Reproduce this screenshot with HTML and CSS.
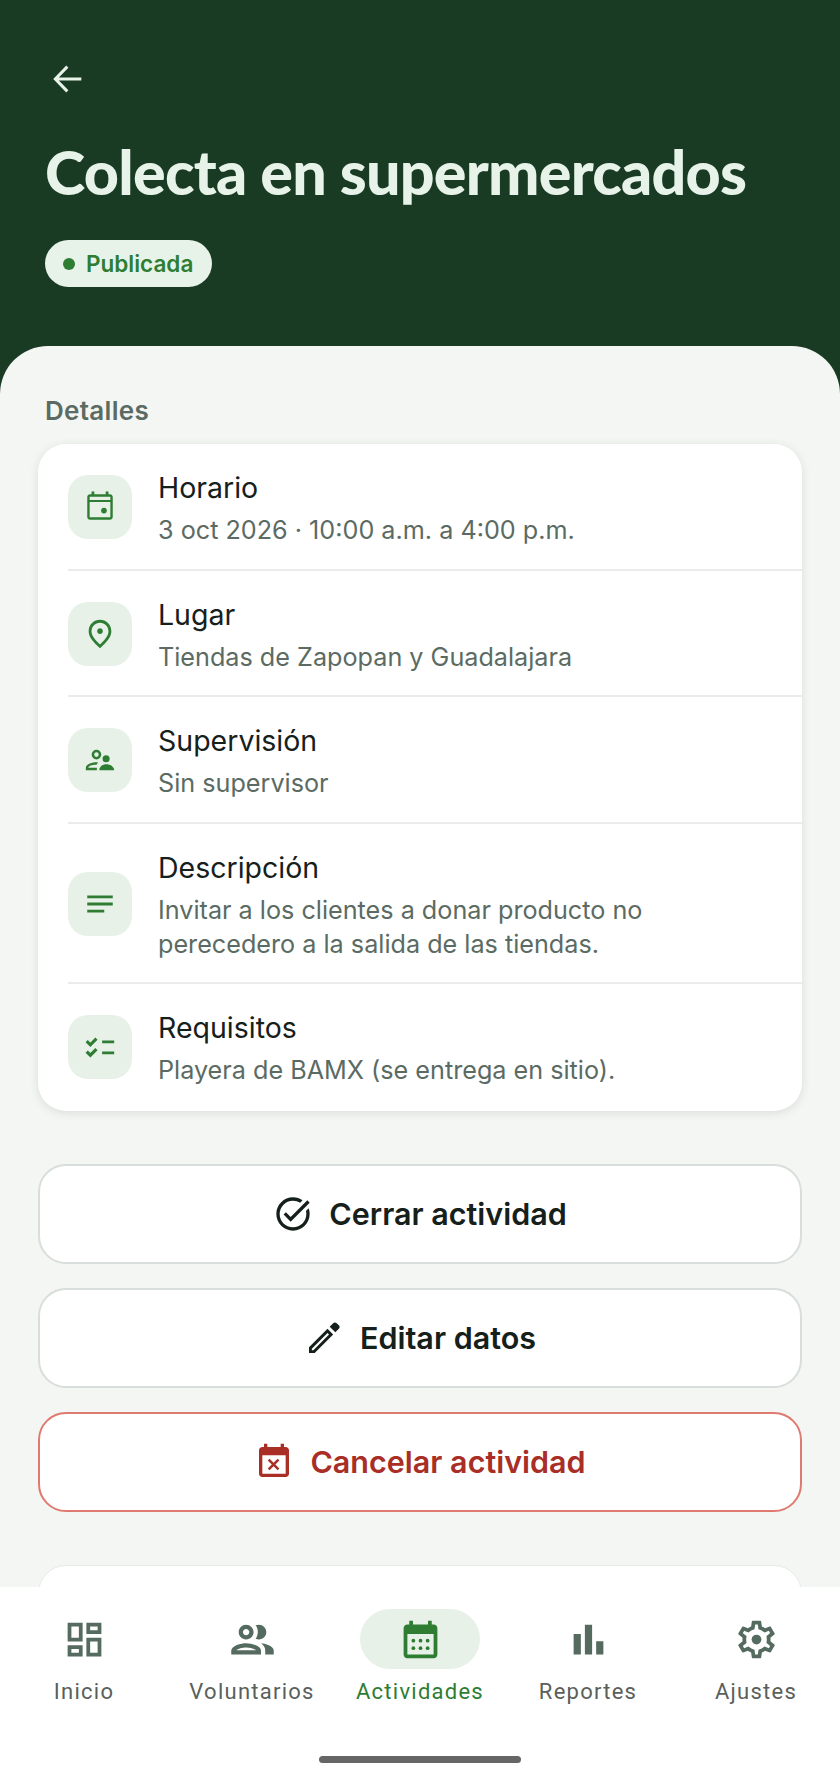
FILE: index.html
```html
<!DOCTYPE html>
<html lang="es">

<head>
  <meta charset="UTF-8">
  <meta name="viewport" content="width=device-width, initial-scale=1.0">
  <title>Colecta en supermercados</title>
  <link rel="stylesheet" href="styles.css">
</head>

<body>
  <div class="screen">
    <header class="hero">
      <svg class="back" viewBox="0 0 24 24"><path d="M20 12H4.8M11.6 4.6 4.4 12l7.2 7.4" /></svg>
      <h1>Colecta en supermercados</h1>
      <span class="chip"><i class="dot"></i>Publicada</span>
    </header>

    <main class="sheet">
      <h2 class="section">Detalles</h2>
      <section class="card">
        <div class="row">
          <div class="row-icon">
            <svg viewBox="0 0 24 24"><path d="M19 3h-1V1h-2v2H8V1H6v2H5c-1.11 0-1.99.9-1.99 2L3 19c0 1.1.89 2 2 2h14c1.1 0 2-.9 2-2V5c0-1.1-.9-2-2-2zm.3 16.300H4.700V8.500h14.600zm0-12.300H4.700V5c0-.2.1-.3.3-.3h14c.2 0 .3.1.3.3z" /><circle cx="14.8" cy="14.5" r="2" /></svg>
          </div>
          <div class="row-text">
            <div class="row-title">Horario</div>
            <div class="row-sub">3 oct 2026 · 10:00 a.m. a 4:00 p.m.</div>
          </div>
        </div>
        <div class="row">
          <div class="row-icon">
            <svg viewBox="0 0 24 24"><path d="M12 12c-1.1 0-2-.9-2-2s.9-2 2-2 2 .9 2 2-.9 2-2 2zm6-1.8C18 6.57 15.35 4 12 4s-6 2.57-6 6.2c0 2.34 1.95 5.44 6 9.14 4.05-3.7 6-6.8 6-9.14zM12 2c4.2 0 8 3.22 8 8.2 0 3.32-2.67 7.25-8 11.8-5.33-4.55-8-8.48-8-11.8C4 5.22 7.8 2 12 2z" /></svg>
          </div>
          <div class="row-text">
            <div class="row-title">Lugar</div>
            <div class="row-sub">Tiendas de Zapopan y Guadalajara</div>
          </div>
        </div>
        <div class="row">
          <div class="row-icon">
            <svg viewBox="0 0 24 24"><path d="M9.5 11.6a3.4 3.4 0 1 1 0-6.800 3.4 3.400 0 0 1 0 6.800zm0-5a1.600 1.600 0 1 0 0 3.200 1.600 1.600 0 0 0 0-3.200zM2 19.200v-1.700c0-2.700 4.600-4.100 8.600-3.900l-1 1.800c-2.900-.1-5.800.8-5.800 2.100h6v1.700z" /><circle cx="16.300" cy="11.100" r="2.500" /><path d="M11.500 19.200c0-2.700 2.600-4.200 5-4.200s5.500 1.500 5.500 4.200z" /></svg>
          </div>
          <div class="row-text">
            <div class="row-title">Supervisión</div>
            <div class="row-sub">Sin supervisor</div>
          </div>
        </div>
        <div class="row">
          <div class="row-icon">
            <svg viewBox="0 0 24 24"><path d="M21 11.010 3 11v2h18zM3 16h12v2H3zM21 6H3v2.010L21 8z" /></svg>
          </div>
          <div class="row-text">
            <div class="row-title">Descripción</div>
            <div class="row-sub">Invitar a los clientes a donar producto no<br>perecedero a la salida de las tiendas.</div>
          </div>
        </div>
        <div class="row">
          <div class="row-icon">
            <svg viewBox="0 0 24 24"><path d="M13.500 7.400h8.500v2h-8.500zM13.500 15.200h8.500v2h-8.500z" /><path class="check" d="M2.600 7.800 5.200 10.400 9.500 6.100M2.600 15.200 5.200 17.800 9.500 13.500" /></svg>
          </div>
          <div class="row-text">
            <div class="row-title">Requisitos</div>
            <div class="row-sub">Playera de BAMX (se entrega en sitio).</div>
          </div>
        </div>
      </section>

      <div class="actions">
        <button class="btn">
          <svg viewBox="0 0 24 24"><path d="M22 5.180 10.590 16.600l-4.240-4.240 1.410-1.410 2.830 2.830 10-10L22 5.180zm-2.210 5.040c.13.570.21 1.170.21 1.780 0 4.420-3.580 8-8 8s-8-3.580-8-8 3.580-8 8-8c1.580 0 3.040.46 4.280 1.250l1.440-1.440C16.100 2.670 14.130 2 12 2 6.480 2 2 6.480 2 12s4.480 10 10 10 10-4.480 10-10c0-1.190-.22-2.330-.6-3.390l-1.610 1.610z" /></svg>
          Cerrar actividad
        </button>
        <button class="btn">
          <svg viewBox="0 0 24 24"><path d="M15.400 5.200 17.500 3.100c.6-.6 1.500-.6 2.100 0l1.300 1.300c.6.6.6 1.500 0 2.100L18.800 8.600z" /><path d="M14.100 6.500 3 17.600V21h3.400L17.500 9.900zm0 2.500.9.9L5.600 19.300H4.700v-.9z" /></svg>
          Editar datos
        </button>
        <button class="btn danger">
          <svg viewBox="0 0 24 24"><path d="M9.310 17l2.440-2.440L14.190 17l1.060-1.060-2.440-2.440 2.440-2.440L14.190 10l-2.440 2.440L9.310 10l-1.060 1.060 2.440 2.440-2.440 2.440L9.310 17zM19 3h-1V1h-2v2H8V1H6v2H5c-1.110 0-1.990.9-1.990 2L3 19c0 1.100.89 2 2 2h14c1.100 0 2-.9 2-2V5c0-1.100-.9-2-2-2zm0 16H5V8h14v11z" /></svg>
          Cancelar actividad
        </button>
      </div>

      <section class="card next"></section>
    </main>

    <nav class="nav">
      <div class="tabs">
        <a class="tab">
          <span class="tab-icon"><svg viewBox="0 0 24 24"><path d="M19 5v2h-4V5h4M9 5v6H5V5h4m10 8v6h-4v-6h4M9 17v2H5v-2h4M21 3h-8v6h8V3zM11 3H3v10h8V3zm10 8h-8v10h8V11zm-10 4H3v6h8v-6z" /></svg></span>
          Inicio
        </a>
        <a class="tab">
          <span class="tab-icon"><svg class="big" viewBox="0 0 24 24"><path d="M9 13.750c-2.340 0-7 1.170-7 3.500V19h14v-1.750c0-2.330-4.660-3.500-7-3.500zM4.340 17c.84-.58 2.870-1.250 4.660-1.250s3.820.67 4.660 1.250H4.340zM9 12c1.930 0 3.500-1.570 3.500-3.500S10.930 5 9 5 5.500 6.570 5.500 8.500 7.070 12 9 12zm0-5c.83 0 1.500.67 1.500 1.500S9.830 10 9 10s-1.500-.67-1.500-1.500S8.170 7 9 7zm7.040 6.810c1.160.84 1.960 1.960 1.960 3.440V19h4v-1.750c0-2.020-3.500-3.170-5.960-3.440zM15 12c1.930 0 3.500-1.570 3.500-3.500S16.930 5 15 5c-.54 0-1.040.13-1.500.35.63.89 1 1.980 1 3.150s-.37 2.260-1 3.150c.46.22.96.35 1.500.35z" /></svg></span>
          Voluntarios
        </a>
        <a class="tab active">
          <span class="tab-icon"><svg viewBox="0 0 24 24"><path d="M19 4h-1V2h-2v2H8V2H6v2H5c-1.100 0-2 .9-2 2v14c0 1.100.9 2 2 2h14c1.100 0 2-.9 2-2V6c0-1.100-.9-2-2-2zm0 16H5V9h14v11z" /><circle cx="8.200" cy="12.600" r="1" /><circle cx="12" cy="12.600" r="1" /><circle cx="15.800" cy="12.600" r="1" /><circle cx="8.200" cy="16.600" r="1" /><circle cx="12" cy="16.600" r="1" /><circle cx="15.800" cy="16.600" r="1" /></svg></span>
          Actividades
        </a>
        <a class="tab">
          <span class="tab-icon"><svg class="big" viewBox="0 0 24 24"><path d="M5 9.400h3.400V19H5zM10.300 5h3.400v14h-3.400zm5.300 7.800H19V19h-3.400z" /></svg></span>
          Reportes
        </a>
        <a class="tab">
          <span class="tab-icon"><svg viewBox="0 0 24 24"><path d="M19.430 12.980c.04-.32.07-.64.07-.98 0-.34-.03-.66-.07-.98l2.110-1.650c.19-.15.24-.42.12-.64l-2-3.460c-.09-.16-.26-.25-.44-.25-.06 0-.12.01-.17.03l-2.490 1c-.52-.4-1.080-.73-1.690-.98l-.38-2.650C14.460 2.180 14.250 2 14 2h-4c-.25 0-.46.18-.49.42l-.38 2.650c-.61.25-1.170.59-1.690.98l-2.490-1c-.06-.02-.12-.03-.18-.03-.17 0-.34.09-.43.25l-2 3.460c-.13.22-.07.49.12.64l2.110 1.650c-.04.32-.07.65-.07.98 0 .33.03.66.07.98l-2.110 1.650c-.19.15-.24.42-.12.64l2 3.460c.09.16.26.25.44.25.06 0 .12-.01.17-.03l2.490-1c.52.4 1.080.73 1.690.98l.38 2.650c.03.24.24.42.49.42h4c.25 0 .46-.18.49-.42l.38-2.650c.61-.25 1.170-.59 1.690-.98l2.490 1c.06.02.12.03.18.03.17 0 .34-.09.43-.25l2-3.460c.12-.22.07-.49-.12-.64l-2.110-1.650zm-1.980-1.710c.04.31.05.52.05.73 0 .21-.02.43-.05.73l-.14 1.130.89.7 1.080.84-.7 1.210-1.270-.51-1.040-.42-.9.68c-.43.32-.84.56-1.250.73l-1.060.43-.16 1.130-.2 1.350h-1.400l-.19-1.350-.16-1.130-1.060-.43c-.43-.18-.83-.41-1.230-.71l-.91-.7-1.060.43-1.270.51-.7-1.210 1.080-.84.89-.7-.14-1.130c-.03-.31-.05-.54-.05-.74s.02-.43.05-.73l.14-1.130-.89-.7-1.080-.84.7-1.210 1.270.51 1.040.42.9-.68c.43-.32.84-.56 1.250-.73l1.060-.43.16-1.130.2-1.350h1.390l.19 1.350.16 1.130 1.060.43c.43.18.83.41 1.230.71l.91.7 1.060-.43 1.270-.51.7 1.210-1.070.85-.89.7.14 1.130z" /><circle cx="12" cy="12" r="2.600" /></svg></span>
          Ajustes
        </a>
      </div>
      <div class="home-bar"></div>
    </nav>
  </div>
</body>

</html>
```

FILE: styles.css
```css
* {
  padding: 0;
  margin: 0;
  box-sizing: border-box;
}

body {
  font-family: Inter, "Liberation Sans", sans-serif;
  background-color: #193b24;
}

.screen {
  display: flex;
  flex-direction: column;
  height: 1782px;
  overflow: hidden;
}

.hero {
  height: 346px;
  padding: 58px 45px 0;
  color: #e7f2e8;
}

.back {
  display: block;
  width: 40px;
  height: 42px;
  margin-left: 3px;
  fill: none;
  stroke: #e7f2e8;
  stroke-width: 1.8;
}

h1 {
  margin-top: 28px;
  font-family: Lato, sans-serif;
  font-size: 61px;
  font-weight: 900;
  line-height: 88px;
  letter-spacing: -0.75px;
  white-space: nowrap;
}

.chip {
  display: inline-flex;
  align-items: center;
  gap: 11px;
  height: 47px;
  margin-top: 24px;
  padding: 0 19px 0 18px;
  background: #e7f2e8;
  border-radius: 24px;
  color: #2e7d32;
  font-size: 22.5px;
  font-weight: 600;
}

.dot {
  width: 12px;
  height: 12px;
  background: #2e7d32;
  border-radius: 50%;
}

.sheet {
  flex: 1;
  min-height: 0;
  padding: 48px 38px 0;
  background: #f4f6f3;
  border-radius: 48px 48px 0 0;
  overflow: hidden;
}

.section {
  margin-left: 7px;
  color: #5b6b63;
  font-size: 26px;
  font-weight: 600;
  line-height: 34px;
  letter-spacing: 0.3px;
}

.card {
  margin-top: 16px;
  background: #fff;
  border-radius: 28px;
  box-shadow: 0 2px 10px rgba(30, 50, 40, 0.12);
}

.row {
  display: flex;
  align-items: center;
  margin-left: 30px;
  padding: 23px 0 21.5px;
  border-bottom: 2px solid #e9ecea;
}

.row:last-child {
  border-bottom-color: transparent;
}

.row-icon {
  display: flex;
  align-items: center;
  justify-content: center;
  flex: none;
  width: 64px;
  height: 64px;
  background: #e7f1e8;
  border-radius: 20px;
}

.row-icon svg {
  width: 34px;
  height: 34px;
  fill: #2e7d32;
}

.row-icon .check {
  fill: none;
  stroke: #2e7d32;
  stroke-width: 2.2;
}

.row-text {
  margin-left: 26px;
  padding-top: 1px;
}

.row-title {
  color: #16201b;
  font-size: 28.5px;
  line-height: 40px;
}

.row-sub {
  margin-top: 5px;
  color: #5b6b63;
  font-size: 25.2px;
  line-height: 34px;
}

.actions {
  display: flex;
  flex-direction: column;
  gap: 24px;
  margin-top: 53px;
}

.btn {
  display: flex;
  align-items: center;
  justify-content: center;
  gap: 16px;
  height: 100px;
  background: #fff;
  border: 2px solid #d8dedb;
  border-radius: 28px;
  color: #16201b;
  font-family: Inter, sans-serif;
  font-size: 30.5px;
  font-weight: 600;
}

.btn svg {
  width: 40px;
  height: 40px;
  fill: currentColor;
}

.danger {
  border-color: #df7a70;
  color: #a82e26;
}

.next {
  height: 120px;
  margin-top: 53px;
  border: 1px solid #e6e9e7;
  box-shadow: none;
}

.nav {
  flex: none;
  height: 195px;
  padding-top: 22px;
  background: #fff;
}

.tabs {
  display: flex;
}

.tab {
  display: flex;
  flex: 1;
  flex-direction: column;
  align-items: center;
  color: #5a5f5c;
  font-family: Roboto, sans-serif;
  font-size: 22px;
  letter-spacing: 1.25px;
  line-height: 30px;
}

.tab-icon {
  display: flex;
  align-items: center;
  justify-content: center;
  width: 120px;
  height: 60px;
  margin-bottom: 8px;
  border-radius: 30px;
}

.tab-icon svg {
  flex: none;
  width: 45px;
  height: 45px;
  fill: #566b60;
}

.tab-icon .big {
  width: 51px;
  height: 51px;
}

.active {
  color: #2e7d32;
}

.active .tab-icon {
  background: #e7f1e8;
}

.active .tab-icon svg {
  fill: #2e7d32;
}

.home-bar {
  width: 202px;
  height: 7px;
  margin: 49px auto 0;
  background: #666;
  border-radius: 4px;
}
```
